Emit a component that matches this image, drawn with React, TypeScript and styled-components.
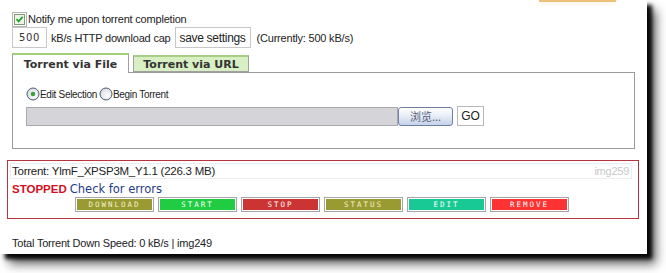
import styled, { createGlobalStyle } from "styled-components";

const GlobalStyle = createGlobalStyle`
  html, body {
    margin: 0;
    padding: 0;
    background: #ffffff;
  }
  body {
    font-family: "Liberation Sans", Arial, sans-serif;
    font-size: 11px;
    color: #222;
    overflow: hidden;
  }
`;

const Page = styled.div`
  width: 666px;
  height: 273px;
  background: #fff;
  overflow: hidden;
`;

const Sheet = styled.div`
  width: 647px;
  height: 254px;
  background: #fff;
  box-shadow: 5px 5px 4px rgba(0, 0, 0, 0.95), 9px 10px 10px rgba(0, 0, 0, 0.6);
  display: flex;
  flex-direction: column;
`;

const TopStrip = styled.div`
  height: 2px;
  display: flex;
`;

const OrangeEdge = styled.div`
  margin-left: 539px;
  width: 77px;
  height: 2px;
  background: #efc07a;
  box-shadow: 0 2px 4px rgba(240, 200, 130, 0.35);
`;

const CheckLine = styled.label`
  margin: 10px 0 0 12px;
  height: 14px;
  display: flex;
  align-items: center;
  gap: 1px;
  letter-spacing: -0.2px;
  color: #222;
`;

const SettingsRow = styled.div`
  margin: 1px 0 0 12px;
  height: 21px;
  display: flex;
  align-items: center;
  letter-spacing: -0.2px;
`;

const CapInput = styled.div`
  box-sizing: border-box;
  width: 35px;
  height: 21px;
  border: 1px solid #c8c8c8;
  display: flex;
  align-items: center;
  justify-content: flex-end;
  padding-right: 6px;
  font-family: "DejaVu Sans", Verdana, sans-serif;
  font-size: 10px;
  letter-spacing: 0.6px;
  color: #333;
`;

const PlainText = styled.span<{ $gap?: number }>`
  margin-left: ${(p) => p.$gap ?? 4}px;
  white-space: nowrap;
`;

const SaveButton = styled.div`
  margin-left: 4px;
  width: 76px;
  height: 21px;
  box-sizing: border-box;
  border: 1px solid #c8c8c8;
  display: flex;
  align-items: center;
  justify-content: center;
  font-size: 12px;
  letter-spacing: -0.3px;
  color: #222;
`;

const TabBar = styled.div`
  margin: 5px 0 0 12px;
  height: 19px;
  display: flex;
  align-items: flex-end;
  gap: 4px;
  position: relative;
  z-index: 1;
`;

const Tab = styled.div<{ $active?: boolean }>`
  box-sizing: border-box;
  width: ${(p) => (p.$active ? 117 : 116)}px;
  height: ${(p) => (p.$active ? 20 : 17)}px;
  margin-bottom: ${(p) => (p.$active ? -1 : 0)}px;
  border: 1px solid #a0a0a0;
  border-top: 2px solid ${(p) => (p.$active ? "#9fd27a" : "#a8cf88")};
  border-bottom: ${(p) => (p.$active ? "none" : "1px solid #a0a0a0")};
  background: ${(p) => (p.$active ? "#ffffff" : "#d7efc2")};
  display: flex;
  align-items: center;
  justify-content: center;
  padding-top: ${(p) => (p.$active ? 1 : 0)}px;
  font-family: "DejaVu Sans", Verdana, sans-serif;
  font-weight: bold;
  font-size: 11px;
  color: #333;
`;

const Panel = styled.div`
  margin-left: 12px;
  width: 623px;
  height: 77px;
  box-sizing: border-box;
  border: 1px solid #9a9a9a;
  padding: 14px 0 0 13px;
  display: flex;
  flex-direction: column;
  gap: 5px;
`;

const RadioRow = styled.div`
  height: 14px;
  display: flex;
  align-items: center;
  font-size: 10px;
  letter-spacing: -0.3px;
  color: #222;
`;

const RadioLabel = styled.span`
  margin-right: 2px;
`;

const FileRow = styled.div`
  height: 20px;
  display: flex;
  align-items: center;
`;

const FileField = styled.div`
  width: 372px;
  height: 19px;
  box-sizing: border-box;
  background: #d5d5d9;
  border: 1px solid #a9a9ad;
`;

const BrowseButton = styled.div`
  width: 55px;
  height: 19px;
  box-sizing: border-box;
  border: 1px solid #6d80a4;
  border-radius: 3px;
  background: linear-gradient(#ffffff, #e9eef7 45%, #c4d2ea);
  display: flex;
  align-items: center;
  justify-content: center;
  font-family: "Noto Sans CJK SC", sans-serif;
  font-size: 11px;
  color: #55607a;
`;

const GoButton = styled.div`
  margin-left: 4px;
  width: 27px;
  height: 20px;
  box-sizing: border-box;
  border: 1px solid #b8b8b8;
  display: flex;
  align-items: center;
  justify-content: center;
  font-size: 12px;
  color: #222;
`;

const TorrentBox = styled.div`
  margin: 11px 0 0 7px;
  width: 632px;
  height: 59px;
  box-sizing: border-box;
  border: 1px solid #b8343f;
  padding: 2px 6px 0 2px;
  display: flex;
  flex-direction: column;
`;

const NameRow = styled.div`
  height: 16px;
  box-sizing: border-box;
  border: 1px solid #ececec;
  display: flex;
  align-items: center;
  justify-content: space-between;
  padding: 0 2px 0 1px;
  font-size: 11.5px;
  letter-spacing: -0.25px;
  color: #222;
`;

const ImgTag = styled.span`
  color: #c8c8c8;
  font-size: 11px;
`;

const StatusRow = styled.div`
  margin-top: 2px;
  height: 15px;
  display: flex;
  align-items: center;
  padding-left: 2px;
`;

const Stopped = styled.span`
  font-weight: bold;
  font-size: 11.5px;
  color: #d2101e;
  margin-right: 3px;
`;

const CheckErrors = styled.span`
  font-family: "DejaVu Sans", Verdana, sans-serif;
  font-size: 11.5px;
  color: #1f3c86;
`;

const ActionRow = styled.div`
  margin-top: 1px;
  display: flex;
  gap: 4px;
  padding-left: 65px;
`;

const ActionButton = styled.div<{ $bg: string; $fg?: string }>`
  width: 79px;
  height: 15px;
  box-sizing: border-box;
  border: 1px solid #a6a6a6;
  box-shadow: inset 0 0 0 1px #ffffff;
  background: ${(p) => p.$bg};
  display: flex;
  align-items: center;
  justify-content: center;
  font-family: "DejaVu Sans Mono", monospace;
  font-size: 7.5px;
  letter-spacing: 2px;
  color: ${(p) => p.$fg ?? "#ffffff"};
`;

const Footer = styled.div`
  margin: 17px 0 0 12px;
  height: 14px;
  display: flex;
  align-items: center;
  letter-spacing: -0.2px;
  color: #222;
`;

function CheckBox() {
  return (
    <svg width="15" height="15" viewBox="0 0 15 15">
      <rect x="0.5" y="0.5" width="14" height="14" fill="none" stroke="#666" strokeDasharray="1 1" />
      <rect x="2.5" y="2.5" width="10" height="10" fill="#f0f3ea" stroke="#7f9a74" />
      <path d="M4.5 7.2 L6.6 9.4 L10.6 4.8" fill="none" stroke="#22a52a" strokeWidth="1.8" />
    </svg>
  );
}

function Radio({ checked }: { checked?: boolean }) {
  const id = checked ? "radioOn" : "radioOff";
  return (
    <svg width="14" height="14" viewBox="0 0 14 14">
      <defs>
        <radialGradient id={id} cx="0.6" cy="0.6" r="0.6">
          <stop offset="0" stopColor="#ffffff" />
          <stop offset="1" stopColor="#d8dde4" />
        </radialGradient>
      </defs>
      <circle cx="7" cy="7" r="6" fill={`url(#${id})`} stroke="#4d5a6e" />
      {checked && <circle cx="7" cy="7" r="2.3" fill="#3fa040" />}
    </svg>
  );
}

const actions = [
  { label: "DOWNLOAD", bg: "#9a9a33", fg: "#f4f2c8" },
  { label: "START", bg: "#1fcc42" },
  { label: "STOP", bg: "#cc3333" },
  { label: "STATUS", bg: "#9a9a33", fg: "#f4f2c8" },
  { label: "EDIT", bg: "#18c995" },
  { label: "REMOVE", bg: "#fb3333" },
];

export default function App() {
  return (
    <Page>
      <GlobalStyle />
      <Sheet>
        <TopStrip>
          <OrangeEdge />
        </TopStrip>
        <CheckLine>
          <CheckBox />
          <span>Notify me upon torrent completion</span>
        </CheckLine>
        <SettingsRow>
          <CapInput>500</CapInput>
          <PlainText>kB/s HTTP download cap</PlainText>
          <SaveButton>save settings</SaveButton>
          <PlainText $gap={6}>(Currently: 500 kB/s)</PlainText>
        </SettingsRow>
        <TabBar>
          <Tab $active>Torrent via File</Tab>
          <Tab>Torrent via URL</Tab>
        </TabBar>
        <Panel>
          <RadioRow>
            <Radio checked />
            <RadioLabel>Edit Selection</RadioLabel>
            <Radio />
            <RadioLabel>Begin Torrent</RadioLabel>
          </RadioRow>
          <FileRow>
            <FileField />
            <BrowseButton>浏览...</BrowseButton>
            <GoButton>GO</GoButton>
          </FileRow>
        </Panel>
        <TorrentBox>
          <NameRow>
            <span>Torrent: YlmF_XPSP3M_Y1.1 (226.3 MB)</span>
            <ImgTag>img259</ImgTag>
          </NameRow>
          <StatusRow>
            <Stopped>STOPPED</Stopped>
            <CheckErrors>Check for errors</CheckErrors>
          </StatusRow>
          <ActionRow>
            {actions.map((a) => (
              <ActionButton key={a.label} $bg={a.bg} $fg={a.fg}>
                {a.label}
              </ActionButton>
            ))}
          </ActionRow>
        </TorrentBox>
        <Footer>Total Torrent Down Speed: 0 kB/s | img249</Footer>
      </Sheet>
    </Page>
  );
}
